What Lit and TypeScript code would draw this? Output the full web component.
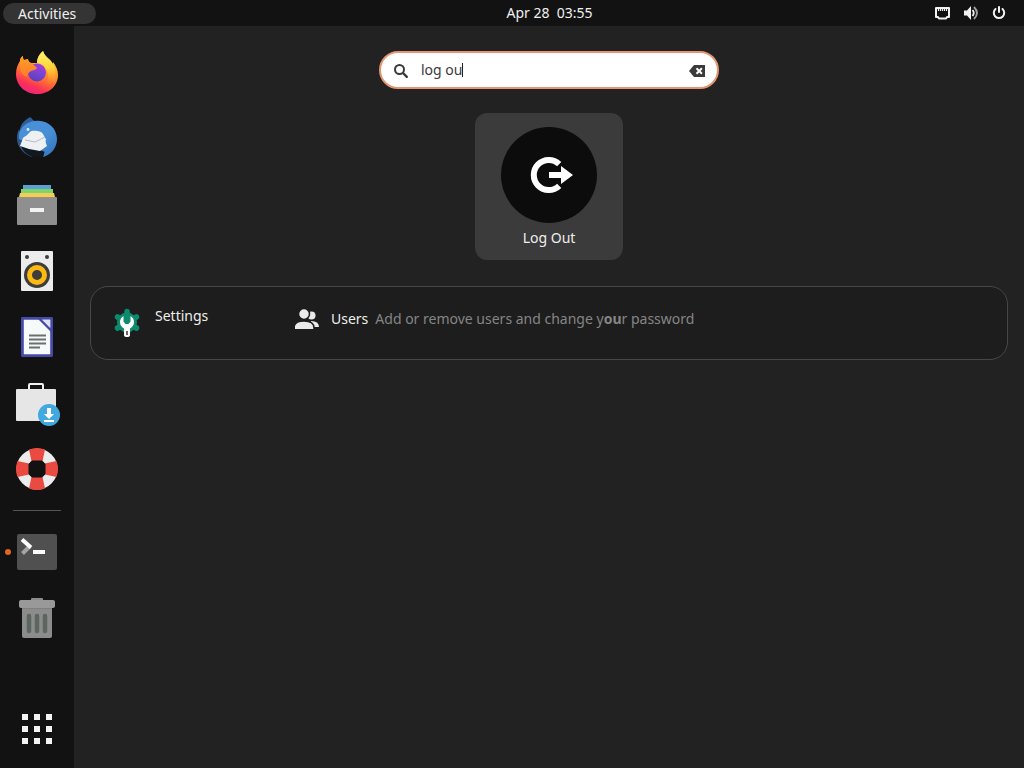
import { LitElement, html, css, svg } from "lit";
import { customElement, state } from "lit/decorators.js";

const icons = {
  firefox: svg`
    <defs>
      <linearGradient id="ff-body" x1="0.75" y1="0.1" x2="0.35" y2="1">
        <stop offset="0" stop-color="#ffe23e"/><stop offset="0.3" stop-color="#ffa52b"/>
        <stop offset="0.6" stop-color="#ff6a35"/><stop offset="0.82" stop-color="#fb2f5a"/><stop offset="1" stop-color="#f0257e"/>
      </linearGradient>
      <linearGradient id="ff-globe" x1="0.7" y1="0" x2="0.3" y2="1">
        <stop offset="0" stop-color="#a43ae0"/><stop offset="0.5" stop-color="#7a44d4"/><stop offset="1" stop-color="#5340b8"/>
      </linearGradient>
      <linearGradient id="ff-head" x1="0.3" y1="0" x2="0.5" y2="1">
        <stop offset="0" stop-color="#ffa024"/><stop offset="1" stop-color="#ff7a2c"/>
      </linearGradient>
      <linearGradient id="ff-flame" x1="0.4" y1="0" x2="0.5" y2="1">
        <stop offset="0" stop-color="#fff36b"/><stop offset="0.5" stop-color="#ffd43a"/><stop offset="1" stop-color="#ff9a2b" stop-opacity="0"/>
      </linearGradient>
    </defs>
    <path fill="url(#ff-body)" d="M30 2c1 4 4 6 7 9 1 1 2 2 3 4v-2c3 4 5 8 5 13 0 11-9 19-21 19S3 36 3 25c0-6 2-10 4-13 0-2 1-4 3-5 0 2 0 3 1 4 2 0 3-1 4-1 0 2 1 3 3 4h6c0-5 2-9 6-12z"/>
    <circle cx="24" cy="23.500" r="9" fill="url(#ff-globe)"/>
    <path fill="url(#ff-flame)" d="M30 2c1 4 4 6 7 9 5 6 7 14 4 23-2 2-5 3-7 2 2-8 1-14-3-19-2-2-4-3-7-3 0-5 3-9 6-12z"/>
    <path fill="url(#ff-head)" d="M7 12c0-2 1-4 3-5 0 2 0 3 1 4 2 0 3-1 4-1 0 2 1 3 3 4 2 2 5 3 6 5-1 2-4 2-6 3-2 1-4 3-4 6-5-1-8-8-7-16z"/>`,
  thunderbird: svg`
    <defs><linearGradient id="tb" x1="0" y1="0" x2="1" y2="1"><stop offset="0" stop-color="#4b90d8"/><stop offset="0.6" stop-color="#468fd6"/><stop offset="1" stop-color="#336fb6"/></linearGradient></defs>
    <path fill="#2c5688" d="M6 14C1 24 5 37 19 42l2-6L9 28z"/>
    <path fill="url(#tb)" d="M18 3c1 2 2 3 4 3 12-2 22 7 22 18 0 9-6 16-14 18 1-2 1-3 1-5L6 24c-1-8 3-15 8-19 1-1 2-2 4-2z"/>
    <path fill="#2f5f98" d="M17 2l4 4c-6 1-11 4-14 10 0-7 5-11 10-14z"/>
    <path fill="#101820" d="M8 31l18 4 6 2c-2 1-2 3-3 5-4-1-6-1-9 0-5-2-10-5-12-11z"/>
    <path fill="#eef1f4" d="M17 17c2-2 8-1 11 0 3 2 3 5 5 7-1 2 0 5 1 7l-7 5-11-2-9-3 3-8c1-1 2-2 3-2z"/>
    <path fill="none" stroke="#b4bcc4" stroke-width="1" d="M12 25l10 2 10-5"/>
    <circle cx="15" cy="14.500" r="1.400" fill="#d9ecff"/>`,
  files: svg`
    <path fill="#5ba0d0" d="M10 4h28v5H10z"/><path fill="#7ed36b" d="M8 8h32v5H8z"/><path fill="#efcf5c" d="M7 12h34l1 4H6z"/>
    <rect x="4" y="16" width="40" height="28" rx="1" fill="#8f8f8f"/><path fill="#b08a68" d="M6 16h36v1H6z"/>
    <rect x="17" y="27" width="14" height="4" fill="#f2f2f2"/>`,
  music: svg`
    <rect x="8" y="4" width="32" height="40" rx="1" fill="#ececec"/>
    <circle cx="14" cy="10" r="2" fill="#3d3d3d"/><circle cx="34" cy="10" r="2" fill="#3d3d3d"/>
    <circle cx="24" cy="28" r="13" fill="#3d3d3d"/><circle cx="24" cy="28" r="7.500" fill="none" stroke="#fcb813" stroke-width="5"/>`,
  writer: svg`
    <path fill="#f7fafb" stroke="#4549a8" stroke-width="2.800" stroke-linejoin="round" d="M9.400 5.400h29.200v37.200H9.400z"/>
    <path fill="#4549a8" d="M25 6h4l10 10v4z"/><path fill="#dfe2f4" d="M29 6.800h8.200v8.200z"/>
    <path stroke="#6b716f" stroke-width="2" d="M16 22.500h17M16 26.500h17M16 30.500h17M16 34.500h11"/>`,
  software: svg`
    <path fill="none" stroke="#f0f0f0" stroke-width="2" d="M16 11V6q0-1 1-1h12q1 0 1 1v5"/>
    <rect x="3" y="10" width="40" height="32" rx="1" fill="#e6e6e6"/>
    <circle cx="36" cy="36" r="11" fill="#42a9de"/>
    <path fill="#fff" d="M34 29h4v6h3l-5 5-5-5h3zM31 41h10v2H31z"/>`,
  help: svg`
    <circle cx="24" cy="24" r="15" fill="none" stroke="#ececec" stroke-width="11"/>
    <path fill="#ea4a40" d="M16 4.500Q24 1.500 32 4.500L29.500 16h-11zM16 43.500Q24 46.500 32 43.500L29.500 32h-11zM4.500 16Q1.500 24 4.500 32L16 29.500v-11zM43.500 16Q46.500 24 43.500 32L32 29.500v-11z"/>
    <path fill="#121212" d="M19 15.500h10l3.500 3.500v10L29 32.500H19L15.500 29V19z"/>`,
  terminal: svg`
    <rect x="4" y="6" width="40" height="36" rx="2" fill="#505050"/>
    <path stroke="#a4a4a4" stroke-width="4" d="M17 18l-7.500 7.500"/><path stroke="#fff" stroke-width="4" d="M9 11.500l9 8"/>
    <rect x="20" y="22" width="12" height="4" fill="#fff"/>`,
  trash: svg`
    <rect x="9" y="12" width="30" height="32" rx="2" fill="#8c8c8c"/>
    <rect x="18" y="4" width="12" height="4" rx="1" fill="#8c8c8c"/><rect x="6" y="6" width="36" height="8" rx="2" fill="#999"/>
    <path fill="#7f7f7f" d="M9 14h30v1H9z"/>
    <path stroke="#5e655f" stroke-width="4.500" stroke-linecap="round" d="M16 22v15M24 22v15M32 22v15"/>`,
  apps: svg`<path fill="#f4f4f4" d="M9 9h6v6H9zM21 9h6v6h-6zM33 9h6v6h-6zM9 21h6v6H9zM21 21h6v6h-6zM33 21h6v6h-6zM9 33h6v6H9zM21 33h6v6h-6zM33 33h6v6h-6z"/>`,
};

type IconName = keyof typeof icons;
interface DockItem { icon: IconName; label: string; running?: boolean; }

const favourites: DockItem[] = [
  { icon: "firefox", label: "Firefox" },
  { icon: "thunderbird", label: "Thunderbird Mail" },
  { icon: "files", label: "Files" },
  { icon: "music", label: "Rhythmbox" },
  { icon: "writer", label: "LibreOffice Writer" },
  { icon: "software", label: "Ubuntu Software" },
  { icon: "help", label: "Help" },
];
const others: DockItem[] = [
  { icon: "terminal", label: "Terminal", running: true },
  { icon: "trash", label: "Trash" },
];

@customElement("top-bar")
class TopBar extends LitElement {
  static styles = css`
    :host { display: grid; grid-template-columns: 1fr auto 1fr; align-items: center; height: 26px; background: #121212; color: #f0f0f0; }
    button { font: inherit; color: inherit; border: 0; background: none; padding: 0; }
    .activities { place-self: end start; margin: 0 0 2px 3px; padding: 0 20px 0 15px; height: 21px; line-height: 20px; border-radius: 11px; background: #343434; }
    .clock { white-space: pre; padding-left: 75px; }
    .status { justify-self: end; display: flex; align-items: center; gap: 12px; margin-right: 17px; }
    svg { display: block; }
  `;
  render() {
    return html`
      <button class="activities">Activities</button>
      <button class="clock">Apr 28  03:55</button>
      <button class="status" aria-label="System menu">
        <svg width="17" height="16" viewBox="0 0 17 16"><path fill="none" stroke="#f2f2f2" stroke-width="2" stroke-linejoin="round" d="M2 3h13v9h-2l-1 1.500H5L4 12H2z"/><path stroke="#f2f2f2" stroke-width="1.200" d="M4.500 3v3M6.500 3v3M8.500 3v3M10.500 3v3M12.500 3v3"/></svg>
        <svg width="16" height="16" viewBox="0 0 16 16"><path fill="#f2f2f2" d="M1 5.500h3L8 1v14l-4-4.500H1z"/><path fill="none" stroke="#f2f2f2" stroke-width="1.800" d="M9.500 5q2.500 3 0 6"/><path fill="none" stroke="#a0a0a0" stroke-width="1.800" d="M11 2q6 6 0 12"/></svg>
        <svg width="16" height="16" viewBox="0 0 16 16"><path fill="none" stroke="#f2f2f2" stroke-width="2" stroke-linecap="round" d="M4.500 4a5.200 5.200 0 1 0 7 0M8 2v5"/></svg>
      </button>`;
  }
}

@customElement("app-dock")
class AppDock extends LitElement {
  static styles = css`
    :host { display: flex; flex-direction: column; width: 74px; box-sizing: border-box; padding: 14px 0 6px; background: #121212; }
    .item { position: relative; display: grid; place-items: center; width: 100%; height: 66px; padding: 0; border: 0; background: none; }
    .running::before { content: ""; position: absolute; left: 5px; top: 30px; width: 6px; height: 6px; border-radius: 50%; background: #e2661f; }
    .separator { height: 1px; margin: 8px 13px; border: 0; background: #555; flex: none; }
    .apps { margin-top: auto; }
    svg { display: block; width: 48px; height: 48px; }
  `;
  item(i: DockItem) {
    return html`<button class="item ${i.running ? "running" : ""}" aria-label=${i.label}><svg viewBox="0 0 48 48">${icons[i.icon]}</svg></button>`;
  }
  render() {
    return html`
      ${favourites.map((i) => this.item(i))}
      <hr class="separator">
      ${others.map((i) => this.item(i))}
      <button class="item apps" aria-label="Show Applications"><svg viewBox="0 0 48 48">${icons.apps}</svg></button>`;
  }
}

@customElement("app-root")
class AppRoot extends LitElement {
  @state() query = "log ou";

  static styles = css`
    :host { display: grid; grid-template: auto 1fr / auto 1fr; min-height: 100vh; background: #222; color: #eee; font: 14px/20px "Noto Sans", sans-serif; }
    top-bar { grid-column: 1 / -1; }
    main { display: flex; flex-direction: column; align-items: center; padding: 25px 16px; }
    button, input { font: inherit; color: inherit; border: 0; background: none; padding: 0; }
    svg { display: block; flex: none; }
    .search { display: flex; align-items: center; box-sizing: border-box; width: 100%; max-width: 340px; height: 38px; padding: 0 12px; border: 2px solid #e59572; border-radius: 19px; background: #fff; color: #3a3a3a; }
    .query { field-sizing: content; min-width: 0; margin-left: 12px; outline: 0; }
    .caret { width: 1px; height: 14px; background: #222; }
    .clear { margin-left: auto; }
    .tile { display: flex; flex-direction: column; align-items: center; gap: 5px; box-sizing: border-box; min-width: 148px; margin-top: 24px; padding: 14px 25px 12px; border-radius: 12px; background: #3b3b3b; }
    .panel { display: flex; align-items: flex-start; box-sizing: border-box; width: 100%; min-height: 74px; margin-top: 26px; padding: 19px 20px; border: 1px solid #474747; border-radius: 18px; background: #1d1d1d; }
    .provider { display: flex; width: 184px; gap: 12px; text-align: left; }
    .result { display: flex; align-items: center; margin-top: 1px; text-align: left; }
    .name { margin-left: 12px; }
    .detail { margin-left: 7px; color: #858585; }
    .detail b { font-weight: 700; }
  `;

  render() {
    return html`
      <top-bar></top-bar>
      <app-dock></app-dock>
      <main>
        <label class="search">
          <svg width="16" height="18" viewBox="0 0 16 18"><circle cx="6.500" cy="8.500" r="4.500" fill="none" stroke="#3a3a3a" stroke-width="2"/><path stroke="#3a3a3a" stroke-width="2.400" stroke-linecap="round" d="M10.500 12.500l3.300 3.300"/></svg>
          <input class="query" aria-label="Search" .value=${this.query} value="log ou" @input=${(e: Event) => (this.query = (e.target as HTMLInputElement).value)}>
          <span class="caret"></span>
          <button class="clear" aria-label="Clear" @click=${() => (this.query = "")}>
            <svg width="16" height="18" viewBox="0 0 16 18"><path fill="#3a3a3a" d="M5 4h11v12H5L0 10z"/><path stroke="#fff" stroke-width="2" d="M7.500 7.300l5.400 5.400M12.900 7.300l-5.400 5.400"/></svg>
          </button>
        </label>
        <button class="tile">
          <svg width="96" height="96" viewBox="0 0 96 96"><circle cx="48" cy="48" r="48" fill="#0c0c0c"/><path fill="none" stroke="#fff" stroke-width="6" d="M58.200 37.200a15 15 0 1 0 0 21.600"/><path fill="#fff" d="M48 45h12v-6l12 9-12 9v-6H48z"/></svg>
          <span>Log Out</span>
        </button>
        <section class="panel">
          <button class="provider">
            <svg width="32" height="32" viewBox="0 0 32 32"><circle cx="16" cy="16.500" r="10" fill="#0b8a6d"/><path stroke="#0b8a6d" stroke-width="5.500" stroke-linecap="round" d="M16 5.500v22M6.500 11l19 11M6.500 22l19-11"/><path fill="#fff" d="M12.500 10v5.500l2 2.500h3l2-2.500V10q3.500 2 3.500 6 0 4-4 6.500V29q0 2-3 2t-3-2v-6.500Q9 20 9 16q0-4 3.500-6z"/><path stroke="#666" stroke-width="2" d="M16 25v4"/></svg>
            <span>Settings</span>
          </button>
          <button class="result">
            <svg width="24" height="24" viewBox="0 0 24 24"><g fill="#eaeaea"><circle cx="16.500" cy="8.500" r="4"/><path d="M16 14q8 0 8 6h-8z"/></g><g fill="#eaeaea" stroke="#1d1d1d" stroke-width="1.500"><circle cx="9" cy="7" r="5.500"/><path d="M-1 23v-2q0-7 10-7t10 7v2z"/></g><path fill="#1d1d1d" d="M0 22h24v2H0z"/></svg>
            <span class="name">Users</span>
            <span class="detail">Add or remove users and change y<b>ou</b>r password</span>
          </button>
        </section>
      </main>`;
  }
}
